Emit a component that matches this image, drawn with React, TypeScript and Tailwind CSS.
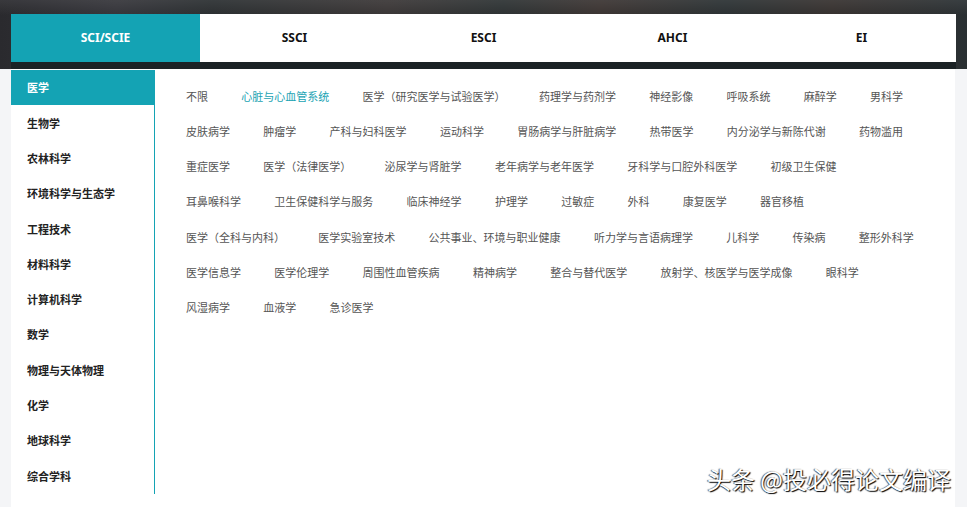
import React, { useState } from "react";

const TABS = ["SCI/SCIE", "SSCI", "ESCI", "AHCI", "EI"];

const FIELDS = [
	"医学",
	"生物学",
	"农林科学",
	"环境科学与生态学",
	"工程技术",
	"材料科学",
	"计算机科学",
	"数学",
	"物理与天体物理",
	"化学",
	"地球科学",
	"综合学科",
];

// subjects under 医学, one array per line
const SUBJECTS: string[][] = [
	["不限", "心脏与心血管系统", "医学（研究医学与试验医学）", "药理学与药剂学", "神经影像", "呼吸系统", "麻醉学", "男科学"],
	["皮肤病学", "肿瘤学", "产科与妇科医学", "运动科学", "胃肠病学与肝脏病学", "热带医学", "内分泌学与新陈代谢", "药物滥用"],
	["重症医学", "医学（法律医学）", "泌尿学与肾脏学", "老年病学与老年医学", "牙科学与口腔外科医学", "初级卫生保健"],
	["耳鼻喉科学", "卫生保健科学与服务", "临床神经学", "护理学", "过敏症", "外科", "康复医学", "器官移植"],
	["医学（全科与内科）", "医学实验室技术", "公共事业、环境与职业健康", "听力学与言语病理学", "儿科学", "传染病", "整形外科学"],
	["医学信息学", "医学伦理学", "周围性血管疾病", "精神病学", "整合与替代医学", "放射学、核医学与医学成像", "眼科学"],
	["风湿病学", "血液学", "急诊医学"],
];

export default function App() {
	const [tab, setTab] = useState(0);
	const [field, setField] = useState(0);
	const [subject, setSubject] = useState("心脏与心血管系统");

	return (
		<div className="relative h-[507px] w-[967px] overflow-hidden bg-[#f4f5f7] font-['Noto_Sans','Noto_Sans_CJK_SC',sans-serif]">
			<header className="h-[69px] bg-[linear-gradient(180deg,rgba(255,255,255,0.07)_0%,rgba(0,0,0,0)_22%),linear-gradient(90deg,#2a2a2e_0%,#35353a_12%,#2b2f31_22%,#3a3636_40%,#2d3233_52%,#3b3432_62%,#2b3133_75%,#36312f_86%,#2a3033_100%)] px-[11px] pt-[14px]">
				<nav className="flex h-[48px] bg-white">
					{TABS.map((t, i) => (
						<button
							key={t}
							type="button"
							onClick={() => setTab(i)}
							className={
								i === tab
									? "flex flex-1 items-center justify-center bg-[#14a3b4] text-[12px] font-bold text-white"
									: "flex flex-1 items-center justify-center text-[12px] font-bold text-[#111]"
							}
						>
							{t}
						</button>
					))}
				</nav>
				<div className="h-[7px] bg-[#1b2225]" />
			</header>

			<div className="flex h-[438px] pl-[11px] pr-[12px]">
				<aside className="w-[144px] shrink-0 bg-white pt-[1px]">
					<ul className="border-r border-[#14a3b4]">
						{FIELDS.map((f, i) => (
							<li
								key={f}
								onClick={() => setField(i)}
								className={
									i === field
										? "flex h-[35.3px] items-center bg-[#14a3b4] pl-4 font-['Noto_Sans_CJK_SC',sans-serif] text-[11px] font-bold text-white"
										: "flex h-[35.3px] items-center pl-4 font-['Noto_Sans_CJK_SC',sans-serif] text-[11px] font-bold text-[#222]"
								}
							>
								{f}
							</li>
						))}
					</ul>
				</aside>

				<main className="flex-1 bg-white pl-[31px] pt-[9.5px] font-['Noto_Sans_CJK_SC',sans-serif] text-[11px]">
					{SUBJECTS.map((row, r) => (
						<div key={r} className="flex h-[35.2px] items-center gap-x-[33.3px] whitespace-nowrap">
							{row.map((s) => (
								<span
									key={s}
									onClick={() => setSubject(s)}
									className={s === subject ? "cursor-pointer text-[#1ba3b3]" : "cursor-pointer text-[#555]"}
								>
									{s}
								</span>
							))}
						</div>
					))}
				</main>
			</div>

			<span className="absolute bottom-[16px] right-[16px] font-['Noto_Sans_CJK_SC',sans-serif] text-[24px] leading-none text-white [text-shadow:1px_1px_1px_#000,-1px_0_1px_#555]">
				头条 @投必得论文编译
			</span>
		</div>
	);
}
